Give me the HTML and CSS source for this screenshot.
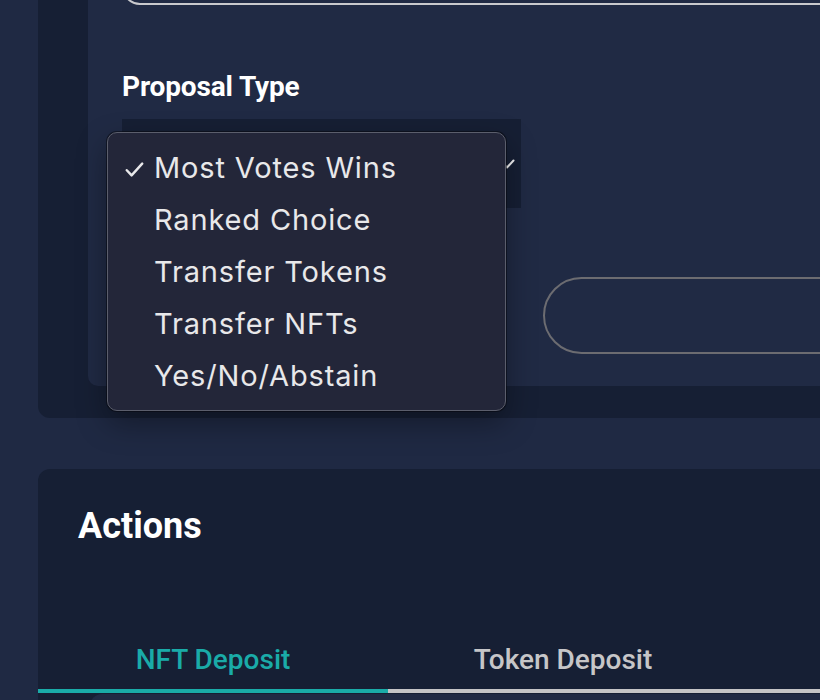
FILE: index.html
```html
<!DOCTYPE html>
<html lang="en">
<head>
<meta charset="utf-8">
<title>Proposal</title>
<link rel="stylesheet" href="styles.css">
</head>
<body>
<div class="page">
  <section class="card card-top">
    <div class="panel">
      <div class="text-input"></div>
      <div class="field-label">Proposal Type</div>
      <div class="select-wrap">
        <div class="select">
          <svg class="chev" width="16" height="10" viewBox="0 0 16 10"><path d="M1.5 1.5 L8 8.5 L14.5 1.5" fill="none" stroke="#f2f2f4" stroke-width="2" stroke-linecap="round" stroke-linejoin="round"/></svg>
        </div>
        <ul class="menu">
          <li class="item"><span class="check"><svg width="19" height="15" viewBox="0 0 19 15"><path d="M1.8 8.2 L6.6 13.4 L17.2 1.6" fill="none" stroke="#e8e8ea" stroke-width="2.4" stroke-linecap="round" stroke-linejoin="round"/></svg></span>Most Votes Wins</li>
          <li class="item"><span class="check"></span>Ranked Choice</li>
          <li class="item"><span class="check"></span>Transfer Tokens</li>
          <li class="item"><span class="check"></span>Transfer NFTs</li>
          <li class="item"><span class="check"></span>Yes/No/Abstain</li>
        </ul>
      </div>
      <div class="row">
        <div class="spacer"></div>
        <div class="pill"></div>
      </div>
    </div>
  </section>
  <section class="card card-actions">
    <h2 class="title">Actions</h2>
    <div class="tabs">
      <div class="tab active">NFT Deposit</div>
      <div class="tab">Token Deposit</div>
      <div class="tab-fill"></div>
    </div>
    <div class="tab-panel"></div>
  </section>
</div>
</body>
</html>
```
FILE: styles.css
```css
html, body {
  margin: 0;
  padding: 0;
}
body {
  background: #1f2943;
  font-family: Roboto, "Liberation Sans", sans-serif;
  overflow: hidden;
  height: 700px;
}
.page {
  padding-left: 38px;
  width: 1400px;
  margin-top: -100px;
}
.card {
  background: #161f34;
  border-radius: 12px;
}
.card-top {
  padding: 0 0 32px 50px;
}
.panel {
  background: #202a44;
  border-radius: 0 0 0 10px;
  padding: 45px 0 32px 34px;
}
.text-input {
  height: 60px;
  box-sizing: border-box;
  border: 2px solid #c9c9cd;
  border-radius: 18px;
}
.field-label {
  margin-top: 65px;
  font-weight: 700;
  font-size: 28px;
  line-height: 34px;
  letter-spacing: -0.15px;
  color: #ffffff;
}
.select-wrap {
  position: relative;
  margin-top: 15px;
  width: 399px;
  height: 89px;
}
.select {
  position: relative;
  height: 89px;
  background: #161f34;
}
.chev {
  position: absolute;
  right: 6px;
  top: 40px;
}
.menu {
  position: absolute;
  left: -15px;
  top: 13px;
  width: 399px;
  box-sizing: border-box;
  margin: 0;
  padding: 8px 0 9px;
  list-style: none;
  background: #232639;
  border: 1px solid #5b5e6c;
  border-radius: 10px;
  box-shadow: 0 0 0 1px rgba(5, 7, 14, 0.55), 0 12px 30px rgba(0, 0, 0, 0.35);
}
.item {
  display: flex;
  align-items: center;
  height: 52px;
  padding-left: 17px;
  font-family: Inter, "Noto Sans", sans-serif;
  font-size: 29px;
  letter-spacing: 0.85px;
  color: #e8e8ea;
}
.check {
  display: inline-flex;
  width: 29px;
  flex: none;
  padding-top: 5px;
}
.row {
  display: flex;
  margin-top: 69px;
}
.spacer {
  width: 421px;
  flex: none;
}
.pill {
  flex: 1;
  height: 77px;
  box-sizing: border-box;
  border: 2px solid #6c6c71;
  border-radius: 40px;
}
.card-actions {
  margin-top: 51px;
  padding-top: 35px;
  border-radius: 12px 12px 0 0;
}
.title {
  margin: 0 0 0 40px;
  font-weight: 700;
  font-size: 36px;
  line-height: 44px;
  color: #ffffff;
}
.tabs {
  display: flex;
  margin-top: 95px;
}
.tab {
  width: 350px;
  flex: none;
  text-align: center;
  font-weight: 500;
  font-size: 28px;
  line-height: 34px;
  padding-bottom: 12px;
  color: #c6c6c8;
  border-bottom: 4px solid #c4c4c6;
}
.tab.active {
  color: #1aaba8;
  border-bottom-color: #1aaba8;
}
.tab-fill {
  flex: 1;
  border-bottom: 4px solid #c4c4c6;
}
.tab-panel {
  margin: 1px 0 0 52px;
  height: 100px;
  background: #202a44;
  border-radius: 12px 0 0 0;
}
```
